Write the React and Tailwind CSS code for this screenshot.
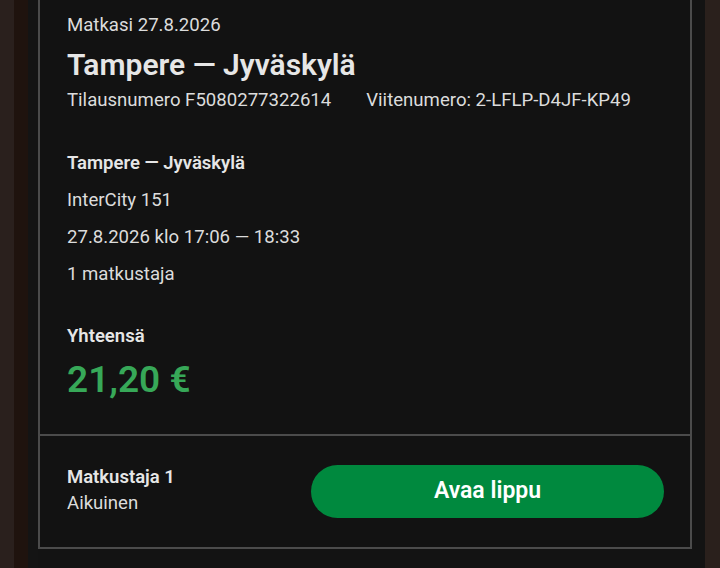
export default function App() {
  const rows = ['InterCity 151', '27.8.2026 klo 17:06 — 18:33', '1 matkustaja']
  return (
    <div className="flex h-[568px] w-[720px] overflow-hidden bg-[#131313] font-['Roboto',sans-serif] text-[#e4e4e4]">
      <div className="w-[14px] shrink-0 bg-[#2a201d]" />
      <div className="w-[14px] shrink-0 bg-[#1f130e]" />
      <div className="w-[10px] shrink-0 bg-[#141414]" />
      <div className="flex h-[549px] w-[654px] shrink-0 flex-col border-x-2 border-b-2 border-[#4b4b4b] bg-[#121212]">
        <div className="flex-1 px-[27px] pt-[13px]">
          <div className="text-[18.6px] leading-6 text-[#dcdcdc]">Matkasi 27.8.2026</div>
          <h1 className="mt-[10px] text-[30px] font-semibold leading-9 text-[#e6e6e6]">Tampere — Jyväskylä</h1>
          <div className="mt-[5px] flex gap-[35px] text-[18.6px] leading-6 text-[#dcdcdc]">
            <span>Tilausnumero F5080277322614</span>
            <span>Viitenumero: 2-LFLP-D4JF-KP49</span>
          </div>
          <div className="mt-[39px] text-[18.5px] font-semibold leading-6 text-[#e6e6e6]">Tampere — Jyväskylä</div>
          {rows.map(r => (
            <div key={r} className="mt-[13px] text-[18.6px] leading-6 text-[#dcdcdc]">{r}</div>
          ))}
          <div className="mt-[38px] text-[18.5px] font-semibold leading-6 text-[#e6e6e6]">Yhteensä</div>
          <div className="mt-[12px] text-[37px] font-semibold leading-10 text-[#37a858]">21,20 €</div>
        </div>
        <div className="flex h-[113px] items-center justify-between border-t-2 border-[#4b4b4b] pl-[27px] pr-[26px]">
          <div className="mb-[3px] flex flex-col gap-[2px]">
            <span className="text-[18.5px] font-semibold leading-6 text-[#e6e6e6]">Matkustaja 1</span>
            <span className="text-[18.6px] leading-6 text-[#dcdcdc]">Aikuinen</span>
          </div>
          <button className="h-[53px] w-[353px] rounded-full bg-[#00893e] text-[23px] font-semibold text-white">
            Avaa lippu
          </button>
        </div>
      </div>
      <div className="w-[13px] shrink-0 bg-[#131313]" />
      <div className="flex-1 bg-[#2a201c]" />
    </div>
  )
}
